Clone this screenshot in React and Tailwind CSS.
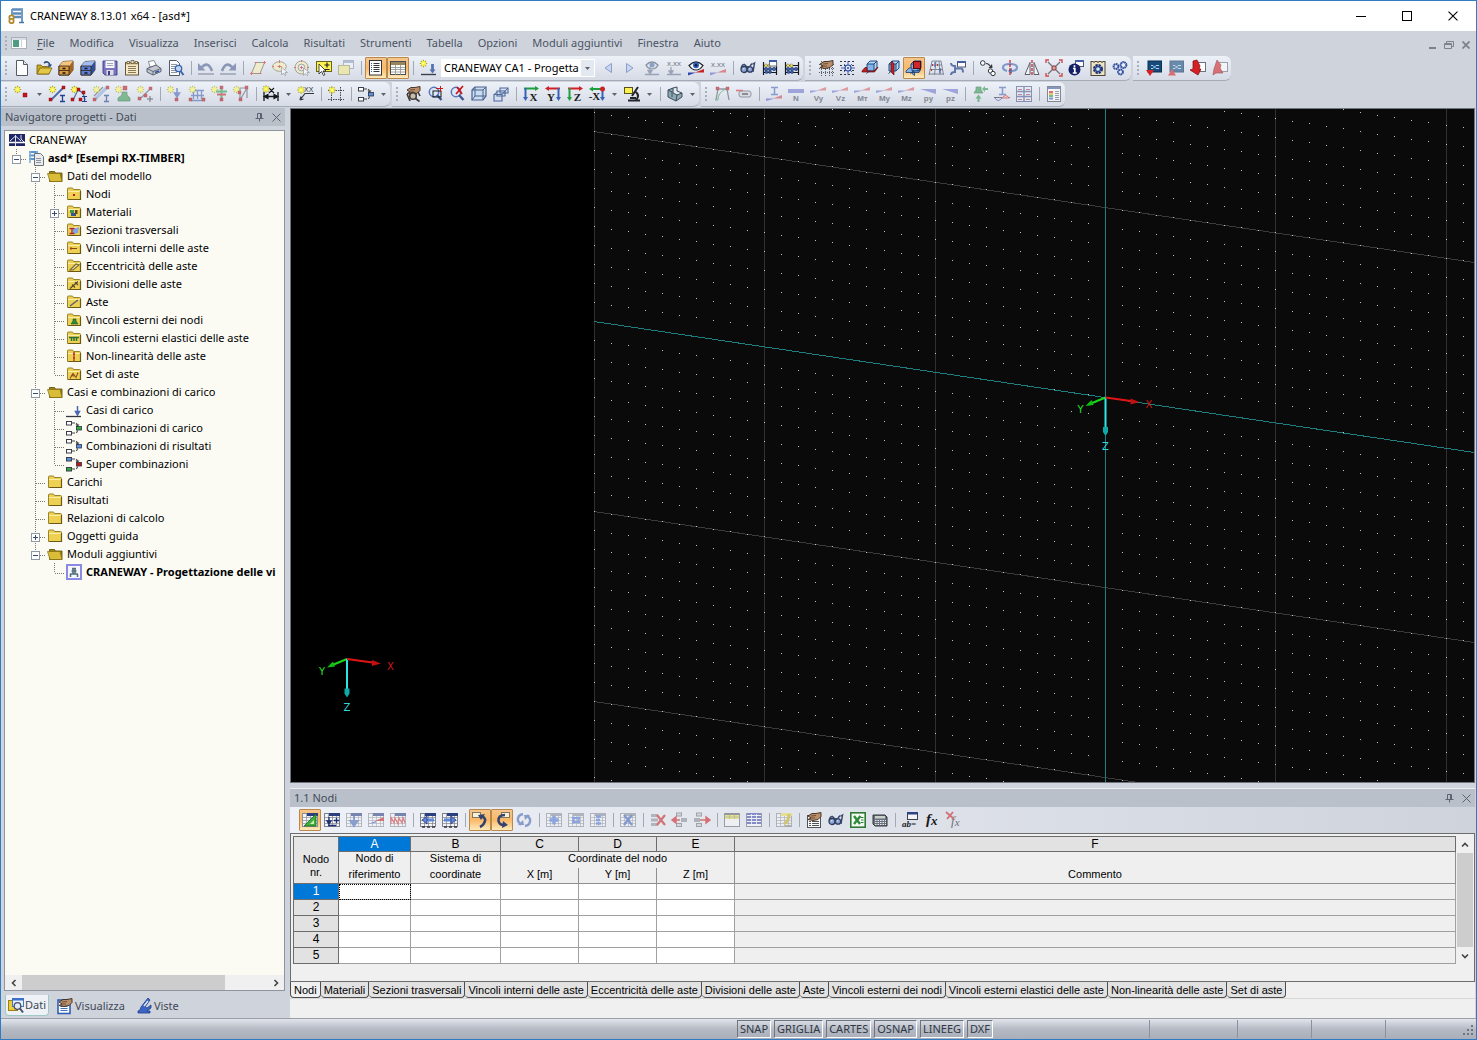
import React from "react";

/* ---------- drawing helpers ---------- */

const Star = ({ x = 3.5, y = 3.5 }) => (
  <g transform={`translate(${x} ${y})`}>
    <path d="M0-3.7V3.7M-3.7 0H3.7M-2.6-2.6 2.6 2.6M2.6-2.6-2.6 2.6" stroke="#a9a31c" strokeWidth="1.1" />
    <circle r="2.5" fill="#f6f23c" />
    <circle r="1.1" fill="#ffffa8" />
  </g>
);

const Sq = ({ x, y, s = 3, c = "#c8141c" }) => (
  <rect x={x} y={y} width={s} height={s} fill={c} stroke="#7a0c10" strokeWidth="0.4" />
);

const GridBack = ({ c = "#8b8f98", head = "#2b3f80" }) => (
  <>
    <rect x="0.5" y="1.5" width="15" height="13" fill="#f3f4f6" stroke={c} />
    <path d="M0 5.5h16M0 8.5h16M0 11.5h16M4.5 2v12M8.5 2v12M12.5 2v12" stroke={c} strokeWidth="0.7" />
    <rect x="5" y="1" width="11" height="3" fill={head} />
  </>
);

const Cube = ({ kind }) => (
  <>
    <path d="M5 4 8 1h7v7l-3 3" fill="#b9d6f4" stroke="#1d4a84" />
    <path d="M5 4h7v7H5z" fill="#86b2e6" stroke="#1d4a84" />
    <path d="M12 4l3-3" stroke="#1d4a84" />
    {kind === 1 && <path d="M0 11 3 7.5h2V11h7l3-3.500h1L12.500 12H0z" fill="#c61f1f" stroke="#5b1013" strokeWidth="0.7" />}
    {kind === 2 && <path d="M8 1l2 3v11l-3-3V4z" fill="#c61f1f" stroke="#5b1013" strokeWidth="0.7" />}
    {kind === 3 && (
      <>
        <rect x="7.500" y="1.500" width="7" height="7" fill="#d0282a" stroke="#55090b" />
        <path d="M0 11l3-3h3v3h7l2-2-2 3.500H0zM6 12h2.500v3.500L6 13.500z" fill="#86b2e6" stroke="#173c70" strokeWidth="0.8" />
      </>
    )}
    <path d="M4.500 13.500 8 10.500" stroke="#20355f" strokeWidth="0.9" />
  </>
);

const Diagram = ({ label, blue }) => (
  <>
    {blue ? (
      <path d="M0 3h16v5z" fill="#7078cc" />
    ) : (
      <>
        <path d="M0 4.5h9L0 7z" fill="#7078cc" />
        <path d="M7 4.5 16 1v3.5z" fill="#d9656b" />
      </>
    )}
    <text x="8.5" y="15" textAnchor="middle" fontFamily="Liberation Sans" fontWeight="bold" fontSize="8" fill="#474b53">
      {label}
    </text>
  </>
);

const AxisView = ({ label, a, b, flip }) => (
  <>
    <path d={flip ? "M15 2.5H3" : "M1 2.5h11"} stroke={a} strokeWidth="2" />
    <path d={flip ? "M4 0v5L0 2.5z" : "M12 0v5l4-2.5z"} fill={a} />
    <path d={flip ? "M13.5 2v10" : "M2.5 2v10"} stroke={b} strokeWidth="2" />
    <path d={flip ? "M11 11h5l-2.500 4z" : "M0 11h5l-2.500 4z"} fill={b} />
    <text x={flip ? 6 : 10.5} y="15" textAnchor="middle" fontFamily="Liberation Serif" fontWeight="bold" fontSize="11" fill="#1c1c1c">
      {label}
    </text>
  </>
);

const Abacus = ({ win }) => (
  <>
    <path d="M1.500 2v13M14.500 2v13M1 5.500h14M1 12.500h14" stroke="#15171c" strokeWidth="1.2" />
    <path d="M1 9h14" stroke="#15171c" strokeWidth="0.7" />
    <g fill="#3c63b8" stroke="#14264f" strokeWidth="0.5">
      <circle cx="4" cy="9" r="1.700" />
      <circle cx="8" cy="9" r="1.700" />
      <circle cx="12" cy="9" r="1.700" />
      <circle cx="4.500" cy="12" r="1.500" />
      <circle cx="8" cy="12" r="1.500" />
    </g>
    <g fill="#f0e070" stroke="#6b6420" strokeWidth="0.5">
      <circle cx="4" cy="5.500" r="1.500" />
      <circle cx="7.500" cy="5.500" r="1.500" />
    </g>
    {win && (
      <>
        <rect x="7.500" y="0.500" width="7" height="5.500" fill="#fff" stroke="#6f7682" />
        <rect x="7" y="0" width="8" height="2" fill="#3b5aa8" />
      </>
    )}
  </>
);

const Binoculars = () => (
  <>
    <path d="M1.500 8.500q0-4 3-4l2 2q2 0 3 1 1-3 3-4" fill="none" stroke="#3d4c70" strokeWidth="1.600" />
    <circle cx="4" cy="9.500" r="3" fill="#8fa8d8" stroke="#303d5c" strokeWidth="1.300" />
    <circle cx="10" cy="9.500" r="2.700" fill="#8fa8d8" stroke="#303d5c" strokeWidth="1.300" />
    <path d="M13 4l1.500-1-1.500 9" stroke="#3d4c70" strokeWidth="1.500" fill="none" />
    <path d="M3 9l1.500-1M9 9l1.500-1" stroke="#eaf1ff" />
  </>
);

const Hand = () => (
  <>
    <path d="M2 4 6 1.500h4l5-1v4l-3 3-5 1-5-1 3-1.500z" fill="#b98e69" stroke="#3a2a1e" strokeWidth="0.900" />
    <path d="M5 4l5-.5M4 6h5" stroke="#4d382a" strokeWidth="0.700" />
  </>
);

const Drawer = ({ a, b, c }) => (
  <>
    <path d="M1 6 5 1.500 15 1v9l-4 5H1z" fill={a} stroke="#3d2b16" strokeWidth="0.900" />
    <path d="M11 15V6l4-5v9z" fill={c} />
    <path d="M1 6 5 1.500 15 1 11 6z" fill={b} />
    <path d="M1 6h10v9H1zM1 10.500h10" fill={a} stroke="#2b2018" strokeWidth="0.800" />
    <path d="M4.500 8.500h3M4.500 13h3" stroke="#161616" strokeWidth="1.400" />
  </>
);

const Combo = ({ a = "#fff", b = "#fff", c }) => (
  <>
    <rect x="0.500" y="1.500" width="5" height="3.500" fill={a} stroke="#3a3f4a" />
    <rect x="0.500" y="11.500" width="5" height="3.500" fill={b} stroke="#3a3f4a" />
    <path d="M6 3h3q2.500 0 2.500 3M6 13h3q2.500 0 2.500-3" fill="none" stroke="#454545" strokeWidth="1.200" strokeDasharray="3 1" />
    <path d="M9.500 4.500h4l-2 2.500z" fill="#454545" />
    <rect x="10.500" y="6.500" width="5" height="3.500" fill={c} stroke="#2a3142" strokeWidth="0.800" />
  </>
);

const Loupe = ({ x = 7, y = 6 }) => (
  <>
    <circle cx={x} cy={y} r="4.700" fill="#dce8f8" stroke="#5676b8" strokeWidth="1.500" />
    <path d={`M${x + 3} ${y + 3}l4.500 5`} stroke="#3d5796" strokeWidth="2.400" />
  </>
);

const Monitor = () => (
  <>
    <rect x="2" y="1" width="13.500" height="11" fill="#164b7c" stroke="#0b2f53" />
    <path d="M5 5.500h2l1.500 1.500L10 5.500h3M5 8.500h2L8.500 7l1.500 1.500h3" stroke="#a8d4f0" fill="none" />
  </>
);

const Sheet = () => (
  <>
    <path d="M2.500 0.500h7l4 4v11h-11z" fill="#fdfdfd" stroke="#555b66" />
    <path d="M9.500 0.500v4h4" fill="#dde1e8" stroke="#555b66" />
  </>
);

const MiniGrid = () => (
  <path d="M1 4.500h15M1 8.500h15M1 12.500h15M3.500 1v15M7.500 1v15M11.500 1v15M14.500 1v15" stroke="#5b5e66" strokeDasharray="1 1" />
);

/* ---------- icon set, 16 x 16 ---------- */

const ICONS = {
  app: (
    <>
      <path d="M4 1.500h11M4 5.500h11M4 9h9" stroke="#5f8dba" strokeWidth="2.500" />
      <path d="M4 1v10M14 1v14" stroke="#6f9cc5" strokeWidth="2" />
      <path d="M11 14.500h5" stroke="#4c769f" strokeWidth="1.500" />
      <circle cx="3.500" cy="9.500" r="2.200" fill="#fff" stroke="#b38a2a" strokeWidth="1.800" />
      <circle cx="3.500" cy="13" r="2.200" fill="#fff" stroke="#b38a2a" strokeWidth="1.800" />
    </>
  ),
  doc: (
    <>
      <rect x="0.500" y="2.500" width="15" height="11" fill="#fff" stroke="#aab0ba" />
      <rect x="1" y="3" width="14" height="2" fill="#d9dde5" />
      <rect x="2" y="5" width="6" height="7" fill="#4e9b84" />
      <path d="M10.500 5v7" stroke="#d0d4da" />
    </>
  ),
  newFile: <Sheet />,
  open: (
    <>
      <path d="M1 14V5h4l1.500 1.500H13V14z" fill="#c9a927" stroke="#6f5a0c" strokeWidth="0.800" />
      <path d="M1 14 4 8h12l-3 6z" fill="#e3c848" stroke="#77610e" strokeWidth="0.800" />
      <path d="M8 3q4-3 6 2" fill="none" stroke="#2f4f80" strokeWidth="1.600" />
      <path d="M11.500 4.500h4.500l-2 3z" fill="#2f4f80" />
    </>
  ),
  drawerO: <Drawer a="#dd9a42" b="#f4c581" c="#a4651d" />,
  drawerB: <Drawer a="#5b80d4" b="#a4bdf0" c="#31509b" />,
  save: (
    <>
      <path d="M1 1h14v14H3l-2-2z" fill="#7874bd" stroke="#413d80" strokeWidth="0.900" />
      <rect x="3.500" y="1" width="9" height="7" fill="#f6f6fa" />
      <path d="M5 3.500h6M5 5.500h6" stroke="#a2a6b6" />
      <rect x="4.500" y="10" width="7" height="5" fill="#dcdde6" />
      <rect x="6" y="11" width="2" height="4" fill="#413d80" />
    </>
  ),
  clip: (
    <>
      <rect x="1.500" y="2.500" width="13" height="12.500" fill="#f6e9c8" stroke="#66583c" />
      <path d="M2 2.500h12v2H2z" fill="#c8ae78" />
      <path d="M3 1.500h2.500v2H3zM7 .5h3v3H7zM11 1.500h2.500v2H11z" fill="#e6dcc0" stroke="#5a4a2c" strokeWidth="0.700" />
      <path d="M4 6.500h8M4 8.500h8M4 10.500h8M4 12.500h8" stroke="#8a7b5a" />
    </>
  ),
  print: (
    <>
      <path d="M4 7 2.500 1.500 8 .5l3 6z" fill="#fff" stroke="#6d727c" strokeWidth="0.800" />
      <path d="M1 8.500 10 5l5 3.500v3L7 15l-6-3z" fill="#c4c8d2" stroke="#4d525d" strokeWidth="0.900" />
      <path d="M1 8.500 7 11.500 15 8.500M7 11.500V15" stroke="#5b606c" fill="none" strokeWidth="0.900" />
      <path d="M9 12.500l4-1.500" stroke="#2f55a5" strokeWidth="1.400" />
    </>
  ),
  preview: (
    <>
      <path d="M1.500 0.500h7l3 3v12h-10z" fill="#fdfdfd" stroke="#555b66" />
      <path d="M3 4.500h6M3 6.500h5M3 8.500h4M3 10.500h4M3 12.500h6" stroke="#8e94a2" />
      <circle cx="10.500" cy="8.500" r="3.200" fill="#bfd6f3" stroke="#3b63aa" strokeWidth="1.300" />
      <path d="M12.500 11l3 4" stroke="#3b63aa" strokeWidth="2" />
    </>
  ),
  undo: (
    <>
      <path d="M3 8Q10 0 14 11" fill="none" stroke="#8b97b6" strokeWidth="2.600" />
      <path d="M0 3v7.500h7.500z" fill="#8b97b6" />
      <path d="M0 14h16" stroke="#9aa2b4" strokeWidth="1.500" />
    </>
  ),
  redo: (
    <>
      <path d="M13 8Q6 0 2 11" fill="none" stroke="#8b97b6" strokeWidth="2.600" />
      <path d="M16 3v7.500H8.500z" fill="#8b97b6" />
      <path d="M0 14h16" stroke="#9aa2b4" strokeWidth="1.500" />
    </>
  ),
  selPoly: (
    <>
      <path d="M1.500 13.500 6 2.500h8.500L10 13.500z" fill="#f6f0b4" stroke="#6d6a58" />
      <path d="M0 13.500h3M1.500 12v3M4.500 2.500h3M13 2.500h3M14.500 1v3M8.500 13.500h3" stroke="#d2302f" />
    </>
  ),
  selEllipse: (
    <>
      <ellipse cx="7.500" cy="6.500" rx="6.800" ry="4.800" fill="#f6f0b4" stroke="#7e7a62" />
      <path d="M5.500 6.500h4M7.500 0v3M7.500 5v3M0 6.500h2" stroke="#d2302f" />
      <path d="M9.500 7v8l2-2 1.500 2.500 1-.5-1-2.500h2.500z" fill="#fff" stroke="#555" strokeWidth="0.600" />
    </>
  ),
  selRing: (
    <>
      <circle cx="7.500" cy="7.500" r="6.500" fill="#f6f0b4" stroke="#7e7a62" />
      <circle cx="7.500" cy="7.500" r="3.400" fill="#e7eaf1" stroke="#7e7a62" />
      <path d="M6 7.500h3M7.500 6v3M7.500 0v2M0 7.500h2M13 7.500h2" stroke="#d2302f" />
      <path d="M9.500 8v7.500l2-2 1.500 2 1-.5-1-2.500h2.500z" fill="#fff" stroke="#555" strokeWidth="0.600" />
    </>
  ),
  selAdd: (
    <>
      <rect x="0.500" y="1.500" width="15" height="10" fill="#fbf14f" stroke="#6a6420" />
      <path d="M8.500 5h5M11 2.500v5M8.500 9.500h5" stroke="#222" strokeWidth="1.200" />
      <path d="M3 4v10l2.500-2.500L7.500 15.500l1.500-1-2-3.500h3z" fill="#fff" stroke="#222" strokeWidth="0.800" />
    </>
  ),
  winCopy: (
    <>
      <rect x="5.500" y="0.500" width="10" height="8" fill="#f2f4f8" stroke="#8e95a6" />
      <rect x="6" y="1" width="9" height="2" fill="#8fa2c8" />
      <rect x="0.500" y="5.500" width="11" height="9" fill="#f1e98a" stroke="#a09763" />
    </>
  ),
  navToggle: (
    <>
      <rect x="1.500" y="0.500" width="12" height="14.500" fill="#fff" stroke="#33363d" />
      <path d="M5.500 3.500h6M5.500 5.500h6M5.500 7.500h6M5.500 9.500h6M5.500 11.500h6" stroke="#33363d" />
      <path d="M3 3.500h1M3 5.500h1M3 7.500h1M3 9.500h1M3 11.500h1" stroke="#3355aa" />
    </>
  ),
  tblToggle: (
    <>
      <rect x="0.500" y="1.500" width="15" height="13" fill="#fffdf4" stroke="#4b4e55" />
      <rect x="1" y="2" width="14" height="3" fill="#9a8558" />
      <path d="M1 7.500h14M1 9.500h14M1 12h14M5.500 5v10M10.500 5v10" stroke="#8c8f96" strokeWidth="0.800" />
    </>
  ),
  newLoad: (
    <>
      <Star />
      <path d="M12.500 4v7" stroke="#5473b4" strokeWidth="2.800" />
      <path d="M9.500 9.500h6L12.500 13.500z" fill="#5473b4" />
      <path d="M1 14.500h15" stroke="#3a3f4a" strokeWidth="1.400" />
    </>
  ),
  prev: <path d="M11.500 3.500v9l-6.500-4.500z" fill="#bccdf0" stroke="#4f70b8" />,
  next: <path d="M4.500 3.500v9L11 8z" fill="#bccdf0" stroke="#4f70b8" />,
  eyeG: (
    <>
      <path d="M2 5q6-6 12 0-2 4-6 4t-6-4z" fill="#dfe5ef" stroke="#4d5668" strokeWidth="1.200" />
      <circle cx="8" cy="5" r="2.500" fill="#4f74b0" />
      <path d="M6 7v5M4 10.500h4L6 14zM1 14.500h14" stroke="#6f7a92" fill="#6f80a5" strokeWidth="1.300" />
    </>
  ),
  xxG: (
    <>
      <text x="8" y="6" textAnchor="middle" fontFamily="Liberation Sans" fontSize="8" fill="#252b37">x.xx</text>
      <path d="M5 7v5M3 11h4l-2 3zM1 14.500h14" stroke="#6f7a92" fill="#6f80a5" strokeWidth="1.300" />
    </>
  ),
  eye: (
    <>
      <path d="M1 5.500q7-7 14 0-3 4.500-7 4.500-4 0-7-4.500z" fill="#fff" stroke="#20242e" strokeWidth="1.200" />
      <circle cx="8" cy="5.200" r="3" fill="#2b5fb8" />
      <circle cx="8" cy="5.200" r="1.200" fill="#0b1735" />
      <path d="M0 12.500h8L0 15.500z" fill="#3445b0" />
      <path d="M7 12.500 16 9v3.500z" fill="#c62428" />
    </>
  ),
  xx: (
    <>
      <text x="8" y="7" textAnchor="middle" fontFamily="Liberation Sans" fontSize="8" fill="#252b37">x.xx</text>
      <path d="M0 12.500h8L0 15.500z" fill="#5f6bc8" />
      <path d="M7 12.500 16 9v3.500z" fill="#d4484c" />
    </>
  ),
  binoc: <Binoculars />,
  abacusW: <Abacus win />,
  abacus: <Abacus />,
  handGrid: (
    <>
      <MiniGrid />
      <Hand />
    </>
  ),
  snapGrid: (
    <>
      <path d="M0 1.500h16M0 5.500h16M0 10.500h16M0 14.500h16" stroke="#30343e" strokeDasharray="2 2" />
      <path d="M8 1v14M1 8h14M4 4l8 8M12 4l-8 8" stroke="#3450a4" strokeWidth="0.900" />
      <circle cx="8" cy="8" r="3" fill="#dfe9fb" stroke="#2c4a9e" strokeWidth="1.200" />
      <circle cx="8" cy="8" r="1" fill="#2c4a9e" />
    </>
  ),
  cube1: <Cube kind={1} />,
  cube2: <Cube kind={2} />,
  cube3: <Cube kind={3} />,
  gridPersp: (
    <>
      <path d="M4 1h9M3 5h11M2 9.500h13M1 14h14M4 1 1 15M8 1 6.500 15M11 1l1 14M13 1l2.500 14" stroke="#777d8a" strokeWidth="0.900" />
      <path d="M4 5h1M9 5h1M3 10h1M12 10h1" stroke="#d02a2a" strokeWidth="1.800" />
      <path d="M7 2v5M12 8v5" stroke="#3f6fc0" strokeWidth="1.200" />
    </>
  ),
  wrenchWin: (
    <>
      <rect x="7.500" y="1.500" width="8" height="5.500" fill="#fff" stroke="#4e5563" />
      <rect x="7" y="1" width="9" height="2" fill="#465fa0" />
      <path d="M1 3q0 3 4 3v6q-4 0-4 3M5 8.500h6q2 0 2 4" fill="none" stroke="#5f76ac" strokeWidth="2" />
    </>
  ),
  copyObj: (
    <>
      <circle cx="2.800" cy="3" r="2.300" fill="#fff" stroke="#33363d" />
      <path d="M6 3.500q3 0 5 4" fill="none" stroke="#33363d" strokeWidth="1.200" />
      <path d="M8.500 8h4l-.5-4z" fill="#33363d" />
      <circle cx="10.500" cy="11" r="2.200" fill="#fff" stroke="#33363d" />
      <circle cx="13" cy="13.500" r="2.200" fill="#fff" stroke="#33363d" />
    </>
  ),
  rotate: (
    <>
      <path d="M5 11q-4-1-4-3.500C1 5 4 4 8 4s7 1 7 3.500c0 2-2 3.500-6 3.500" fill="none" stroke="#7d97c8" strokeWidth="2.200" />
      <path d="M10 8v6l-4-3z" fill="#5c7ab6" />
      <path d="M8 0v16" stroke="#c9191d" strokeWidth="1.200" strokeDasharray="3 1" />
    </>
  ),
  mirror: (
    <>
      <path d="M6 2.500v12H1zM10 2.500v12h5z" fill="#f3f5f9" stroke="#5b5f69" />
      <path d="M8 0v16" stroke="#c9191d" strokeWidth="1.200" strokeDasharray="3 1" />
    </>
  ),
  explode: (
    <>
      <path d="M2 2l12 12M14 2 2 14" stroke="#6f7075" strokeWidth="1.200" />
      <circle cx="8" cy="8" r="2.200" fill="#d9a0a0" stroke="#8b3033" />
      <path d="M0 3V0h3M13 0h3v3M0 13v3h3M13 16h3v-3" stroke="#d24a4c" fill="none" strokeWidth="1.400" />
    </>
  ),
  info: (
    <>
      <rect x="7.500" y="0.500" width="8" height="6" fill="#fff" stroke="#4e5563" />
      <rect x="7" y="0" width="9" height="2" fill="#465fa0" />
      <circle cx="6.500" cy="9.500" r="6" fill="#141f68" />
      <path d="M6.500 5.200v2M5 8.500h1.800v4M4.800 13h4" stroke="#fff" strokeWidth="1.700" fill="none" />
    </>
  ),
  gearDoc: (
    <>
      <rect x="1" y="1.500" width="14" height="14" fill="#ece3c8" stroke="#4b4538" />
      <path d="M3 1h2v2H3zM7 1h2v2H7zM11 1h2v2h-2z" fill="#8d8264" />
      <circle cx="8" cy="9" r="3.800" fill="#d7e2f5" stroke="#1e2f66" strokeWidth="2.400" strokeDasharray="2.200 0.800" />
      <circle cx="8" cy="9" r="2.600" fill="none" stroke="#2c478f" strokeWidth="1.500" />
    </>
  ),
  gears: (
    <g fill="#e8eefb" stroke="#33509c" strokeWidth="2">
      <circle cx="4" cy="6.500" r="2.400" strokeDasharray="1.600 .4" />
      <circle cx="11.500" cy="5" r="2.900" strokeDasharray="1.600 .4" />
      <circle cx="8.500" cy="12" r="2.400" strokeDasharray="1.600 .4" />
    </g>
  ),
  mon: (
    <>
      <Monitor />
      <path d="M0 10h8l-4 6z" fill="#d62124" />
    </>
  ),
  monUp: (
    <>
      <Monitor />
      <path d="M0 15.500h8L4 9z" fill="#d62124" />
    </>
  ),
  redPage: (
    <>
      <rect x="6.500" y="2.500" width="9" height="9" fill="#fdfdfd" stroke="#6c7280" />
      <path d="M3 1l4-1 3 6-1 3h2l-3 6-8-5 3-1z" fill="#d62124" stroke="#7b0c10" strokeWidth="0.700" />
    </>
  ),
  redPageUp: (
    <>
      <rect x="6.500" y="2.500" width="9" height="9" fill="#fdfdfd" stroke="#6c7280" />
      <path d="M5 0l4 5-1 3 3 5H4l-3 2 1-6z" fill="#d62124" stroke="#7b0c10" strokeWidth="0.700" />
    </>
  ),
  /* second row */
  node: (
    <>
      <Star />
      <Sq x={9} y={7} s={4} />
    </>
  ),
  member: (
    <>
      <path d="M2 14 14 2" stroke="#4c6ca8" strokeWidth="1.800" />
      <Star />
      <Sq x={0} y={12} />
      <Sq x={13} y={0} />
      <path d="M11 9.500h5M13.500 9.500v6M11 15.500h5" stroke="#24408e" strokeWidth="1.300" />
    </>
  ),
  memberSet: (
    <>
      <path d="M2 14 7 4l5 3 2 7" stroke="#4c6ca8" strokeWidth="1.200" fill="none" />
      <Star x={3.5} y={3.5} />
      <Sq x={0} y={12} />
      <Sq x={6} y={2} />
      <Sq x={11} y={5} />
      <Sq x={8} y={12} />
      <path d="M11 10.500h5M13.500 10.500v5M11 15.500h5" stroke="#24408e" strokeWidth="1.200" />
    </>
  ),
  memberT: (
    <>
      <path d="M2 14 14 2M1 10 10 1" stroke="#5b6270" strokeWidth="1.300" />
      <path d="M3 12 13 2" stroke="#8db0dc" strokeWidth="3" />
      <Star />
      <Sq x={0} y={12} />
      <Sq x={13} y={0} />
      <path d="M11 9.500h5M13.500 9.500v6M11 15.500h5" stroke="#24408e" strokeWidth="1.300" />
    </>
  ),
  support: (
    <>
      <Star x={3.5} y={3.5} />
      <Sq x={8} y={0} s={4} />
      <path d="M7 6h5v3l3 3v3H3v-3l4-3z" fill="#3f9e55" stroke="#246638" strokeWidth="0.700" />
    </>
  ),
  hinge: (
    <>
      <path d="M2 14 14 2" stroke="#5b6270" strokeWidth="1.300" />
      <Star />
      <Sq x={1} y={11} />
      <Sq x={7} y={8} />
      <Sq x={12} y={1} />
      <path d="M13 10v6M10 13h6" stroke="#2a2d33" />
    </>
  ),
  loadNode: (
    <>
      <Star />
      <path d="M10 2v6M7.500 7h5L10 11z" stroke="#4a69b4" strokeWidth="1.600" fill="#4a69b4" />
      <Sq x={8} y={12} />
    </>
  ),
  loadMember: (
    <>
      <path d="M2 9.500h13M2 14.500h14M4.500 4v9M8.500 4v9M12.500 4v9M3 4.500h12" stroke="#4a69b4" strokeWidth="1.300" />
      <Star />
      <Sq x={0} y={12} />
      <Sq x={13} y={12} />
    </>
  ),
  loadMoment: (
    <>
      <Star />
      <Sq x={9} y={0} />
      <path d="M5 5.500h11M10.500 3v10" stroke="#2f9b4d" strokeWidth="2" />
      <Sq x={9} y={12} />
      <path d="M6 8.500h9" stroke="#c8282a" strokeWidth="2" />
    </>
  ),
  loadFree: (
    <>
      <path d="M7 2v12M7 2h7v10M14 2 7 14" stroke="#5a6070" strokeWidth="1.200" fill="none" />
      <Star />
      <Sq x={5} y={5} />
      <Sq x={12} y={0} />
      <Sq x={6} y={12} />
    </>
  ),
  dim: (
    <>
      <path d="M1 6v9M15 6v9M2 10.500h12" stroke="#15171c" strokeWidth="1.300" />
      <path d="M1 10.500l4-2v4zM15 10.500l-4-2v4zM6 2l5 5M11 2 6 7" fill="#15171c" stroke="#15171c" strokeWidth="1.100" />
      <Star x={3} y={3} />
    </>
  ),
  comment: (
    <>
      <path d="M2 14 7 7.500h9M2 14l1-3.500M2 14l3.500-1" stroke="#33363d" strokeWidth="1.200" fill="none" />
      <text x="6" y="6" fontFamily="Liberation Sans" fontSize="7" fill="#33363d">XX</text>
      <Star x={3} y={4} />
    </>
  ),
  guideGrid: (
    <>
      <path d="M3.500 1v15M12.500 1v15M0 4.500h16M0 13.500h16" stroke="#43464e" strokeDasharray="1.500 1" />
      <Star x={4} y={4} />
    </>
  ),
  combB: <Combo c="#5b8fe0" />,
  pan: (
    <>
      <Hand />
      <circle cx="8" cy="10" r="3.300" fill="#c8bba8" stroke="#3d3a38" strokeWidth="1.500" />
      <path d="M10.500 12.500l4 3M2 8l3 7M13 6l2 4" stroke="#3d3a38" strokeWidth="1.600" />
    </>
  ),
  zoomWin: (
    <>
      <Loupe />
      <rect x="6" y="5" width="8" height="6" fill="none" stroke="#16181d" />
      <path d="M9 2.500h7M13.500 0v6" stroke="#c9191d" />
    </>
  ),
  zoomX: (
    <>
      <Loupe />
      <path d="M8 1l5 7M14 0 7 8" stroke="#c9191d" strokeWidth="1.800" />
    </>
  ),
  cubeWire: (
    <>
      <path d="M1 4 4 1h11v9l-3 4H1z" fill="#c9dcf0" stroke="#4a628c" strokeWidth="1.200" />
      <path d="M1 4h11v10M12 4l3-3M4 1v9h11M4 10l-3 4" stroke="#4a628c" fill="none" />
    </>
  ),
  cubes: (
    <>
      <path d="M7 2h8v5H7zM4 5h8v5H4zM1 8.500h8V15H1z" fill="#d5dff0" stroke="#4e679c" strokeWidth="1.100" />
      <path d="M1 8.500 4 6M9 8.500 15 2" stroke="#4e679c" />
    </>
  ),
  vX: <AxisView label="X" a="#1f9e3c" b="#3a62b8" />,
  vY: <AxisView label="Y" a="#cf2226" b="#3a62b8" flip />,
  vZ: <AxisView label="Z" a="#cf2226" b="#1f9e3c" />,
  vmX: (
    <>
      <path d="M13 3H3" stroke="#1f9e3c" strokeWidth="2" />
      <path d="M4 .5v5L0 3z" fill="#1f9e3c" />
      <path d="M13.500 3v9" stroke="#3a62b8" strokeWidth="2" />
      <path d="M11 11h5l-2.500 4z" fill="#3a62b8" />
      <circle cx="13.500" cy="3" r="2.500" fill="#cf2226" />
      <text x="5.500" y="14" textAnchor="middle" fontFamily="Liberation Serif" fontWeight="bold" fontSize="11" fill="#1c1c1c">-X</text>
    </>
  ),
  micro: (
    <>
      <path d="M14 1 8 10M4 14.500h12M12 6q4 4 0 8M6 12h6" stroke="#23252b" strokeWidth="2" fill="none" />
      <rect x="0.500" y="1.500" width="8" height="6" fill="#fbf14f" stroke="#55501c" />
    </>
  ),
  solid: (
    <>
      <path d="M1 4 6 2v5l4 2 5-2v4l-6 4-8-4z" fill="#8fa9b5" stroke="#3b4d5b" />
      <path d="M6 2l4-1v4l5 2M10 9l-1 6M1 4l4 2v5" stroke="#3b4d5b" fill="none" />
    </>
  ),
  deform: (
    <>
      <path d="M2 14 4 3h9l2 11" fill="none" stroke="#5b606c" strokeWidth="1.300" />
      <path d="M4 14Q4 6 12 3M1 14h3" stroke="#3a9f58" fill="none" />
      <Sq x={2} y={1} />
      <Sq x={12} y={1} />
    </>
  ),
  stress: (
    <>
      <rect x="3" y="5" width="12" height="6" rx="2" fill="#d3d6dd" stroke="#5f6470" />
      <path d="M6 8h6" stroke="#555" strokeWidth="2" />
      <path d="M0 4.500h7" stroke="#c34" strokeWidth="1.600" />
    </>
  ),
  resI: (
    <>
      <path d="M5 1.500h7M8.500 1.500v7M5 8.500h7" stroke="#4a69b4" strokeWidth="1.500" />
      <path d="M0 12.500h9L0 15z" fill="#5b63c8" />
      <path d="M7 12.500 16 9v3.500z" fill="#d05055" />
    </>
  ),
  dN: (
    <>
      <rect x="0" y="3" width="16" height="4" fill="#7078cc" />
      <text x="8" y="15" textAnchor="middle" fontFamily="Liberation Sans" fontWeight="bold" fontSize="8" fill="#474b53">N</text>
    </>
  ),
  dVy: <Diagram label="Vy" />,
  dVz: <Diagram label="Vz" />,
  dMt: <Diagram label="Mт" />,
  dMy: <Diagram label="My" />,
  dMz: <Diagram label="Mz" />,
  dpy: <Diagram label="py" blue />,
  dpz: <Diagram label="pz" blue />,
  react: (
    <>
      <path d="M4 1h5v3l2 3H2l2-3z" fill="#359a50" stroke="#246638" strokeWidth="0.700" />
      <path d="M16 3h-4M6.500 16v-4" stroke="#359a50" strokeWidth="2" />
      <path d="M13 0v6l-3-3zM3.500 12.500h6l-3-4z" fill="#359a50" />
    </>
  ),
  section: (
    <>
      <path d="M5 1.500h7M8.500 1.500v7M5 8.500h7" stroke="#4a69b4" strokeWidth="1.500" />
      <path d="M0 11.500h16" stroke="#33363d" />
      <path d="M1 12q3 5 7 0" fill="none" stroke="#3a50b8" />
      <path d="M8 12q4-5 7 0z" fill="#eec3c5" stroke="#c33" />
    </>
  ),
  resGrid: (
    <>
      <rect x="0.500" y="0.500" width="15" height="15" fill="#e9ecf4" stroke="#4a5890" />
      <path d="M8 0v16M0 5.500h16M0 10.500h16" stroke="#4a5890" strokeWidth="1.400" />
      <path d="M2 3.500h4M10 3.500h4M2 8.500h4M10 8.500h4M2 13.500h4M10 13.500h4" stroke="#a44a58" />
    </>
  ),
  panel: (
    <>
      <rect x="1.500" y="0.500" width="13" height="15" fill="#fff" stroke="#454a55" />
      <rect x="2" y="1" width="12" height="2" fill="#465fa0" />
      <path d="M3 6h4" stroke="#d22" strokeWidth="2" />
      <path d="M3 8h4" stroke="#e8b422" strokeWidth="2" />
      <path d="M3 10h4" stroke="#3aa04a" strokeWidth="2" />
      <path d="M3 12.500h4" stroke="#3a62c8" strokeWidth="2" />
      <path d="M9 5.500h4M9 7.500h4M9 9.500h4M9 11.500h4M9 13.500h4" stroke="#6a6f7a" />
    </>
  ),
  /* table toolbar */
  tEdit: (
    <>
      <GridBack />
      <path d="M2 14 14 2v12z" fill="#3fae3a" stroke="#1f6a1d" strokeWidth="0.800" />
      <path d="M8 12l4-4v4z" fill="#c8f0b8" />
    </>
  ),
  tInsert: (
    <>
      <GridBack c="#7d818b" />
      <path d="M5 5v5M3 9h4L5 12zM10 8.500h5M12.500 6v5M4 13.500h8" stroke="#1d2f78" strokeWidth="1.300" fill="#1d2f78" />
    </>
  ),
  tDown: (
    <>
      <GridBack />
      <path d="M8 4v6M4.500 9h7L8 14z" stroke="#4a69b4" strokeWidth="2" fill="#4a69b4" />
    </>
  ),
  tDiag: (
    <>
      <GridBack />
      <path d="M0 12 8 9v1.500z" fill="#3445b0" />
      <path d="M7 9l9-4v4z" fill="#c62428" />
    </>
  ),
  tWave: (
    <>
      <GridBack />
      <path d="M1 12V5l3 6 1-5 3 6 1-6 3 5 1-6 2 6" fill="none" stroke="#d23a3d" strokeWidth="1.200" />
    </>
  ),
  tLeft: (
    <>
      <GridBack c="#7d818b" />
      <path d="M14 8H6" stroke="#5f87d8" strokeWidth="3" />
      <path d="M7 4v8L2 8z" fill="#5f87d8" stroke="#1d2f78" strokeWidth="0.700" />
      <path d="M2 15h3M7 15h3M12 15h3" stroke="#333" strokeWidth="1.500" />
    </>
  ),
  tRight: (
    <>
      <GridBack c="#7d818b" />
      <path d="M2 8h8" stroke="#5f87d8" strokeWidth="3" />
      <path d="M9 4v8l5-4z" fill="#5f87d8" stroke="#1d2f78" strokeWidth="0.700" />
      <path d="M2 15h3M7 15h3M12 15h3" stroke="#333" strokeWidth="1.500" />
    </>
  ),
  tSync1: (
    <>
      <rect x="0.500" y="0.500" width="8" height="5" fill="#f8efd8" stroke="#7f7760" />
      <path d="M9 4q5 2 4 5-1 4-5 6" fill="none" stroke="#33436e" strokeWidth="2.600" />
      <path d="M6 3l7-1-4 6z" fill="#33436e" />
    </>
  ),
  tSync2: (
    <>
      <rect x="7.500" y="0.500" width="8" height="5" fill="#f8efd8" stroke="#7f7760" />
      <path d="M11 3Q4 3 4.500 9q1 4 5 4" fill="none" stroke="#33436e" strokeWidth="2.600" />
      <path d="M9 9l5 4-6 3z" fill="#33436e" />
    </>
  ),
  tRefresh: (
    <>
      <path d="M7 2Q1 3 2 9l3 4M9 14q6-1 5-7l-3-4" fill="none" stroke="#4a69b4" strokeWidth="2.400" />
      <path d="M2 13h6l-1-5zM14 3H8l1 5z" fill="#4a69b4" />
    </>
  ),
  tPlus: (
    <>
      <GridBack head="#8b8f98" />
      <path d="M8 3.500v9M3.500 8h9" stroke="#4f77d2" strokeWidth="3.400" />
    </>
  ),
  tCut: (
    <>
      <GridBack head="#8b8f98" />
      <path d="M4 6h8M4 10h8M5.500 4.500v7M10.500 4.500v7" stroke="#4f77d2" strokeWidth="2.200" />
    </>
  ),
  tMinus: (
    <>
      <GridBack head="#8b8f98" />
      <path d="M6 4.500h5M6 8h4M6 11.500h5" stroke="#4f77d2" strokeWidth="2.400" />
    </>
  ),
  tDel: (
    <>
      <GridBack head="#8b8f98" />
      <path d="M4 3l8 10M12 3 4 13" stroke="#3f62bc" strokeWidth="2.200" />
    </>
  ),
  tRowX: (
    <>
      <path d="M1 3.500h7M1 8h7M1 12.500h7" stroke="#8d9098" strokeWidth="3" />
      <path d="M7 3l8 10M15 3 7 13" stroke="#c82428" strokeWidth="2.200" />
    </>
  ),
  tRowL: (
    <>
      <rect x="4.500" y="1" width="5" height="3" fill="#c9ccd3" stroke="#777" />
      <rect x="4.500" y="11.500" width="5" height="3" fill="#c9ccd3" stroke="#777" />
      <rect x="9" y="6" width="6" height="4" fill="#8b8f98" />
      <path d="M8 8H2M4 5v6L0 8z" stroke="#c82428" strokeWidth="1.400" fill="#c82428" />
    </>
  ),
  tRowR: (
    <>
      <rect x="2.500" y="1" width="5" height="3" fill="#c9ccd3" stroke="#777" />
      <rect x="2.500" y="11.500" width="5" height="3" fill="#c9ccd3" stroke="#777" />
      <rect x="0" y="6" width="6" height="4" fill="#8b8f98" />
      <path d="M6 8h7M12 5v6l4-3z" stroke="#c82428" strokeWidth="1.400" fill="#c82428" />
    </>
  ),
  tYellow: (
    <>
      <rect x="0.500" y="1.500" width="15" height="13" fill="#f5f6f8" stroke="#6b6f78" />
      <rect x="1" y="3" width="14" height="4" fill="#e8e05a" />
      <path d="M1 2h14" stroke="#5c606a" strokeWidth="2" />
      <path d="M1 5h14M5.500 2v5M10.500 2v5" stroke="#8d8f60" strokeWidth="0.700" />
    </>
  ),
  tBlue: (
    <>
      <rect x="0.500" y="1.500" width="15" height="13" fill="#f5f6f8" stroke="#6b6f78" />
      <path d="M1 2h14M1 5h14M1 8h14M1 11h14" stroke="#4552b0" strokeWidth="2" />
      <path d="M5.500 2v12M10.500 2v12" stroke="#fff" strokeWidth="0.800" />
    </>
  ),
  tPaint: (
    <>
      <GridBack head="#e8e05a" />
      <path d="M13 2q0 7-5 10" stroke="#c9b022" strokeWidth="3" fill="none" />
      <path d="M9 14h6" stroke="#777" strokeWidth="1.500" />
    </>
  ),
  tHandDoc: (
    <>
      <rect x="1.500" y="3.500" width="13" height="12" fill="#fbfbfb" stroke="#4e525b" />
      <path d="M3 9.500h2M6 9.500h7M3 11.500h2M6 11.500h7M3 13.500h2M6 13.500h7" stroke="#4e525b" />
      <Hand />
    </>
  ),
  excel: (
    <>
      <rect x="0.800" y="0.800" width="14.400" height="14.400" fill="#f5fbf4" stroke="#2d7a35" strokeWidth="1.600" />
      <path d="M4 4l6 8M10.500 4 4 12" stroke="#2d8a3a" strokeWidth="2.400" />
      <path d="M11 5.500h2.500M11 8h2.500M11 10.500h2.500" stroke="#2d7a35" />
    </>
  ),
  calc: (
    <>
      <path d="M1 3h12l2 2v9H3l-2-2z" fill="#6c727e" stroke="#30343c" />
      <rect x="3" y="4" width="10" height="2.500" fill="#c9d2c8" />
      <path d="M3 8.500h11M3 10.500h11M3 12.500h11" stroke="#e8ebf0" strokeDasharray="1.500 1" />
    </>
  ),
  abEq: (
    <>
      <rect x="5.500" y="0.500" width="10" height="7" fill="#f3f4f7" stroke="#3a3f4a" />
      <rect x="5" y="0" width="11" height="2.500" fill="#2f4383" />
      <text x="0" y="15" fontFamily="Liberation Serif" fontStyle="italic" fontWeight="bold" fontSize="9" fill="#16181d">ab=</text>
    </>
  ),
  fx: (
    <text x="2" y="12" fontFamily="Liberation Serif" fontStyle="italic" fontWeight="bold" fontSize="15" fill="#16181d">
      f<tspan fontSize="13" dy="1">x</tspan>
    </text>
  ),
  fxDel: (
    <>
      <text x="5" y="13" fontFamily="Liberation Serif" fontStyle="italic" fontSize="13" fill="#1f232c">
        f<tspan fontSize="11" dy="1">x</tspan>
      </text>
      <path d="M0 0l8 7M7 0 1 7" stroke="#c82428" strokeWidth="1.700" />
    </>
  ),
  /* navigator */
  bridge: (
    <>
      <rect x="0" y="2" width="16" height="12" fill="#1f2566" />
      <path d="M0 10.500h16" stroke="#fff" strokeWidth="1.500" />
      <path d="M1 9 6.500 4 12 9M6.500 3v11M12 3v4l3 3" stroke="#dfe3f5" fill="none" />
    </>
  ),
  project: (
    <>
      <path d="M1 2h9M1 5.500h9M1 9h9" stroke="#5a96cf" strokeWidth="2.200" />
      <path d="M2 1v12M9 1v12" stroke="#7fb0dc" strokeWidth="1.600" />
      <path d="M6.500 3.500h6l3 3v9h-9z" fill="#e9ebee" stroke="#6b6f78" />
      <path d="M8 8.500h5M8 10.500h5M8 12.500h5" stroke="#8e929b" />
    </>
  ),
  folderOpen: (
    <>
      <path d="M2.500 13.500v-10h5l1 1.500h6.500v8.500z" fill="#9c8218" stroke="#6a580e" strokeWidth="0.900" />
      <path d="M0.500 5.500h12.500l2 8h-12z" fill="#d9bd38" stroke="#806b12" strokeWidth="0.700" />
    </>
  ),
  folder: (
    <>
      <path d="M1.500 13.500V3q0-1 1-1h4l1 1.500h6q1 0 1 1v9z" fill="#eed152" stroke="#8f7820" strokeWidth="0.900" />
      <path d="M2 5.500h12" stroke="#fbeea6" />
      <path d="M14.500 5v8.500h-12" stroke="#6d5a12" strokeWidth="1.200" fill="none" />
    </>
  ),
  loadCase: (
    <>
      <path d="M11.500 4v7M9.500 9.500h4L11.500 13z" fill="#4a69b4" stroke="#4a69b4" strokeWidth="1.500" />
      <path d="M0 14.500h15" stroke="#33363d" strokeWidth="1.300" />
    </>
  ),
  comboG: <Combo c="#2fae39" />,
  comboR: <Combo a="#5b8fe0" b="#2fae39" c="#c0161c" />,
  module: (
    <>
      <rect x="1" y="1" width="14" height="14" fill="#f6f6ff" stroke="#8a8ae0" strokeWidth="2" />
      <path d="M6 4.500h4M5.500 7h5M4 10h8M4.500 10v3M11.500 10v3M7 5v5M9 5v5" stroke="#56707a" strokeWidth="1.600" fill="none" />
    </>
  ),
  tabData: (
    <>
      <rect x="0.500" y="3.500" width="9" height="10" fill="#eccb3c" stroke="#9a7f17" />
      <rect x="4.500" y="1.500" width="11" height="8" fill="#e8f0fb" stroke="#4a74c0" />
      <rect x="4" y="1" width="12" height="2.500" fill="#3d6fc8" />
      <circle cx="9.500" cy="9" r="3.300" fill="#dfeaf8" stroke="#45516b" strokeWidth="1.300" />
      <path d="M12 11.500l3 4" stroke="#45516b" strokeWidth="2" />
    </>
  ),
  tabView: (
    <>
      <rect x="1" y="2" width="12" height="13.500" fill="#fdfdfd" stroke="#2f5fb4" strokeWidth="1.600" />
      <path d="M3.500 8.500h7M3.500 10.500h7M3.500 12.500h7" stroke="#3f6fc0" />
      <Hand />
    </>
  ),
  tabCam: (
    <>
      <path d="M11 0 4 9l-1 3-2 1v2h12v-2h-3l4-3V7l-4 3-2-1 5-7z" fill="#3d66c4" stroke="#1f3d8a" strokeWidth="0.800" />
      <path d="M11 3 7 8" stroke="#dfe9fb" strokeWidth="1.400" />
    </>
  ),
};

const FOLDER_MARKS = {
  fNode: <path d="M7 8h2v2H7z" fill="#c8141c" />,
  fMat: (
    <>
      <rect x="4" y="6" width="4" height="3" fill="#3a9a4a" />
      <rect x="5" y="9" width="5" height="3" fill="#36568f" />
      <rect x="9" y="6" width="2.500" height="4" fill="#6b4423" />
    </>
  ),
  fSec: (
    <>
      <path d="M7 7l6-2-1 6-5 1z" fill="#7fa3ee" />
      <path d="M3.500 6.500h5M6 6.500v5M3.500 11.500h5" stroke="#a8282c" strokeWidth="1.300" />
    </>
  ),
  fHinge: (
    <>
      <path d="M4 7.500h2v2H4z" fill="#b0392c" />
      <path d="M6 8.500h5" stroke="#7a4b18" />
    </>
  ),
  fEcc: <path d="M4 12l6-6 3 1-6 5z" fill="#e9e3b8" stroke="#7b6a2a" strokeWidth="1.100" />,
  fDiv: <path d="M4 12.500 12 5.500M6 8.500l3 3M9 6l3 3" fill="none" stroke="#5a4a28" strokeWidth="1.200" />,
  fMem: <path d="M4 12 12 6" stroke="#5b6270" strokeWidth="1.500" />,
  fSup: <path d="M7 7h3v2l2 3H5l2-3z" fill="#2f8a3d" stroke="#1d5c28" strokeWidth="0.600" />,
  fEl: <path d="M3 7.500h10M5.500 8v3M8 8v3M10.500 8v3" stroke="#28733a" strokeWidth="1.500" />,
  fNon: <path d="M8 4v9M7 6h2M7 10h2" stroke="#b0392c" strokeWidth="1.300" />,
  fSet: <path d="M4 12.500 7 7.500l3 4 2-5M5 9.500l6 1" fill="none" stroke="#8c4a22" strokeWidth="1.100" />,
};

function Icon({ name, className = "size-4" }) {
  const mark = FOLDER_MARKS[name];
  return (
    <svg viewBox="0 0 16 16" fill="none" aria-hidden="true" className={`shrink-0 overflow-visible ${className}`}>
      {mark ? (
        <>
          {ICONS.folder}
          {mark}
        </>
      ) : (
        ICONS[name]
      )}
    </svg>
  );
}

/* ---------- toolbars ---------- */

function ToolButton({ name, state }) {
  const on = state === "on";
  return (
    <button
      type="button"
      aria-label={name}
      className={`flex h-[22px] w-[22px] shrink-0 items-center justify-center ${
        on ? "rounded-[1px] border border-[#b8894a] bg-linear-to-b from-[#f5c68c] via-[#fbb866] to-[#fdeaba]" : ""
      }`}
    >
      <Icon name={name} className={state === "off" ? "size-4 opacity-60" : "size-4"} />
    </button>
  );
}

const Grip = () => (
  <div className="flex w-[10px] shrink-0 flex-col items-center gap-[2px]">
    {[0, 1, 2, 3].map((i) => (
      <i key={i} className="size-[2px] bg-[#a9afba]" />
    ))}
  </div>
);

const Sep = () => (
  <div className="flex w-2 shrink-0 justify-center">
    <i className="h-3.5 w-px bg-[#a2a8b4]" />
  </div>
);

const Arrow = () => (
  <button type="button" aria-label="Altro" className="flex h-[22px] w-[13px] shrink-0 items-center justify-center">
    <svg viewBox="0 0 5 3" className="h-[3px] w-[5px]" aria-hidden="true">
      <path d="M0 0h5L2.500 3z" fill="#5c6370" />
    </svg>
  </button>
);

/* "|" separator, ":" arrow, "-" prefix disabled, "+" prefix pressed */
function Items({ list }) {
  return list.split(" ").map((t, i) => {
    if (t === "|") return <Sep key={i} />;
    if (t === ":") return <Arrow key={i} />;
    if (t[0] === "-") return <ToolButton key={i} name={t.slice(1)} state="off" />;
    if (t[0] === "+") return <ToolButton key={i} name={t.slice(1)} state="on" />;
    return <ToolButton key={i} name={t} />;
  });
}

const Band = ({ children }) => (
  <div className="flex h-[25px] items-center rounded-r-md border-b border-[#a5abb6] bg-linear-to-b from-[#edf1f8] to-[#d6dbe6]">
    {children}
  </div>
);

function Toolbars() {
  return (
    <div className="flex flex-col gap-px bg-[#cfd3dc] pb-px">
      <div className="flex gap-0.5">
        <Band>
          <Grip />
          <Items list="newFile open drawerO drawerB save clip print preview | undo redo | -selPoly -selEllipse -selRing selAdd -winCopy | +navToggle +tblToggle | newLoad" />
          <div className="mx-0.5 flex h-[18px] w-[154px] bg-white">
            <select
              aria-label="Modulo"
              className="h-[18px] w-full appearance-none overflow-hidden bg-white pl-[3px] font-['Noto_Sans',sans-serif] text-[11px] leading-[18px] text-black"
            >
              <option>CRANEWAY CA1 - Progetta</option>
            </select>
            <span className="m-px flex w-[13px] shrink-0 items-center justify-center bg-[#e4e8f0]">
              <svg viewBox="0 0 5 3" className="h-[3px] w-[5px]" aria-hidden="true">
                <path d="M0 0h5L2.500 3z" fill="#5c6370" />
              </svg>
            </span>
          </div>
          <Items list="-prev -next -eyeG -xxG eye -xx | binoc abacusW abacus" />
        </Band>
        <Band>
          <Grip />
          <Items list="handGrid snapGrid cube1 cube2 +cube3 gridPersp wrenchWin | copyObj rotate mirror explode info gearDoc gears" />
        </Band>
        <Band>
          <Grip />
          <Items list="mon -monUp redPage -redPageUp" />
        </Band>
      </div>
      <div className="flex gap-0.5">
        <Band>
          <Grip />
          <Items list="node : member memberSet -memberT -support -hinge | -loadNode -loadMember -loadMoment -loadFree | dim : comment | guideGrid | combB :" />
        </Band>
        <Band>
          <Grip />
          <Items list="pan zoomWin zoomX cubeWire cubes | vX vY vZ vmX : micro : | solid :" />
        </Band>
        <Band>
          <Grip />
          <Items list="-deform -stress | -resI -dN -dVy -dVz -dMt -dMy -dMz -dpy -dpz | -react -section -resGrid | -panel" />
        </Band>
      </div>
    </div>
  );
}

/* ---------- navigator tree ---------- */

/* guides: one letter per column. v = through line, t = tee, l = last elbow, space = empty */
const TREE = [
  ["", "bridge", "CRANEWAY"],
  ["l", "project", "asd* [Esempi RX-TIMBER]", "-", true],
  [" t", "folderOpen", "Dati del modello", "-"],
  [" vt", "fNode", "Nodi"],
  [" vt", "fMat", "Materiali", "+"],
  [" vt", "fSec", "Sezioni trasversali"],
  [" vt", "fHinge", "Vincoli interni delle aste"],
  [" vt", "fEcc", "Eccentricità delle aste"],
  [" vt", "fDiv", "Divisioni delle aste"],
  [" vt", "fMem", "Aste"],
  [" vt", "fSup", "Vincoli esterni dei nodi"],
  [" vt", "fEl", "Vincoli esterni elastici delle aste"],
  [" vt", "fNon", "Non-linearità delle aste"],
  [" vl", "fSet", "Set di aste"],
  [" t", "folderOpen", "Casi e combinazioni di carico", "-"],
  [" vt", "loadCase", "Casi di carico"],
  [" vt", "comboG", "Combinazioni di carico"],
  [" vt", "combB", "Combinazioni di risultati"],
  [" vl", "comboR", "Super combinazioni"],
  [" t", "folder", "Carichi"],
  [" t", "folder", "Risultati"],
  [" t", "folder", "Relazioni di calcolo"],
  [" t", "folder", "Oggetti guida", "+"],
  [" l", "folderOpen", "Moduli aggiuntivi", "-"],
  ["  l", "module", "CRANEWAY - Progettazione delle vi", null, true],
];

function Guide({ kind, sign }) {
  const drawing = (
    <svg viewBox="0 0 19 18" className="h-[18px] w-[19px] shrink-0" aria-hidden="true" shapeRendering="crispEdges">
      {kind !== " " && <path d={kind === "l" ? "M9.5 0v10" : "M9.5 0v18"} stroke="#77776f" strokeDasharray="1 1" />}
      {(kind === "t" || kind === "l") && <path d="M10 10.5h10" stroke="#77776f" strokeDasharray="1 1" />}
      {sign && (
        <>
          <rect x="5.5" y="6.5" width="8" height="8" fill="#fff" stroke="#8f98a8" />
          <path d={sign === "+" ? "M7 10.5h5M9.5 8v5" : "M7 10.5h5"} stroke="#3a4a78" />
        </>
      )}
    </svg>
  );
  return sign ? (
    <button type="button" aria-label={sign === "+" ? "Espandi" : "Comprimi"} className="shrink-0">
      {drawing}
    </button>
  ) : (
    drawing
  );
}

function TreeRow({ row }) {
  const [guides, icon, text, sign, bold] = row;
  return (
    <li className="flex h-[18px] items-center pl-[2px] whitespace-nowrap">
      {guides.split("").map((g, i) => (
        <Guide key={i} kind={g} sign={i === guides.length - 1 ? sign : null} />
      ))}
      <span className="flex w-[19px] shrink-0 justify-center">
        <Icon name={icon} />
      </span>
      <span className={bold ? "pl-[3px] font-bold" : "pl-[3px]"}>{text}</span>
    </li>
  );
}

const Pin = () => (
  <svg viewBox="0 0 9 9" className="size-[9px]" fill="none" stroke="#5c6370" aria-hidden="true">
    <path d="M2.500 5.500v-5h4v5M5.500 0.500v5M0.500 5.500h8M4.500 5.500v3" />
  </svg>
);
const Cross = ({ className = "size-[9px]" }) => (
  <svg viewBox="0 0 9 9" className={className} fill="none" stroke="currentColor" aria-hidden="true">
    <path d="M0.500 0.500l8 8M8.500 0.500l-8 8" />
  </svg>
);

const PanelHeader = ({ title }) => (
  <div className="flex h-[18px] shrink-0 items-center gap-2 bg-[#b9c0ca] pr-1 pl-1 text-[#444c58]">
    <h2 className="flex-1">{title}</h2>
    <button type="button" aria-label="Blocca">
      <Pin />
    </button>
    <button type="button" aria-label="Chiudi" className="text-[#5c6370]">
      <Cross />
    </button>
  </div>
);

const Chevron = ({ d }) => (
  <svg viewBox="0 0 8 8" className="size-2" fill="none" stroke="#444" strokeWidth="1.600" aria-hidden="true">
    <path d={d} />
  </svg>
);

function Navigator() {
  return (
    <aside className="flex w-[284px] shrink-0 flex-col">
      <PanelHeader title="Navigatore progetti - Dati" />
      <div className="mt-1 ml-[3px] flex min-h-0 flex-1 flex-col border border-[#8f959f] bg-[#fbfbf4]">
        <ul className="min-h-0 flex-1 overflow-hidden text-black">
          {TREE.map((row, i) => (
            <TreeRow key={i} row={row} />
          ))}
        </ul>
        <div className="flex h-[15px] shrink-0 items-center bg-[#f0f0f0]">
          <button type="button" aria-label="Scorri a sinistra" className="flex w-[17px] justify-center">
            <Chevron d="M5.500 1 2.500 4l3 3" />
          </button>
          <div className="flex h-full flex-1">
            <div className="h-full w-[83%] bg-[#cdcdcd]" />
          </div>
          <button type="button" aria-label="Scorri a destra" className="flex w-[17px] justify-center">
            <Chevron d="M2.500 1l3 3-3 3" />
          </button>
        </div>
      </div>
      <div className="mt-1 flex h-[23px] shrink-0 items-start gap-1 px-1 text-[#3f4856]">
        <button type="button" className="flex h-[21px] items-center gap-px rounded-b border border-t-0 border-[#9fc7c4] bg-[#eef1f5] px-0.5">
          <Icon name="tabData" />
          Dati
        </button>
        <button type="button" className="flex h-[21px] items-center gap-0.5 px-1">
          <Icon name="tabView" />
          Visualizza
        </button>
        <button type="button" className="flex h-[21px] items-center gap-px px-1">
          <Icon name="tabCam" />
          Viste
        </button>
      </div>
    </aside>
  );
}

/* ---------- model view ---------- */

const OX = 303;
const OY = 212;
const STEP_X = 17.03;
const STEP_Y = 19;
const SLOPE = 0.1488;

let dots = "";
for (let i = 0; i < 100; i++) {
  for (let j = -60; j < 60; j++) {
    const x = Math.round(OX + i * STEP_X);
    const y = Math.round(OY + j * STEP_Y + i * STEP_X * SLOPE);
    if (y >= 0) dots += `M${x} ${y}h1v1h-1z`;
  }
}

const columns = [0, 1, 2, 4, 5, 6, 7, 8];
const diagonals = [-3, -2, -1, 1, 2, 3, 4];

function Triad({ x, y }) {
  return (
    <g transform={`translate(${x} ${y})`} fontFamily="DejaVu Sans" fontSize="10" textAnchor="middle">
      <path d="M0 0l-17 7" stroke="#18d818" strokeWidth="2" />
      <path d="M-20 8.500l6-6 2 5z" fill="#10c010" />
      <path d="M0 0v32" stroke="#2fe6e6" strokeWidth="2" />
      <path d="M-2.500 29.500h5v5L0 38.500l-2.500-4z" fill="#10a8a8" />
      <path d="M0 0l29 4" stroke="#e01414" strokeWidth="2" />
      <path d="M25 1l9 3.500-9 2.500z" fill="#c01010" />
      <text x="43.500" y="10.500" fill="#d01818">X</text>
      <text x="-25" y="15.500" fill="#28e028">Y</text>
      <text x="0" y="52" fill="#30d8e0">Z</text>
    </g>
  );
}

function ModelView() {
  return (
    <div className="min-h-0 flex-1 overflow-hidden border border-[#6f757f] bg-black">
      <svg className="block size-full" role="img" aria-label="Modello">
        <rect x={OX} y="0" width="100%" height="100%" fill="#0a0a0a" />
        <g shapeRendering="crispEdges">
          {columns.map((c) => (
            <rect key={c} x={OX + Math.round(c * 10 * STEP_X)} y="0" width="1" height="3000" fill="#303030" />
          ))}
          {diagonals.map((d) => (
            <path key={d} d={`M${OX} ${OY + d * 190 + 0.5}l2000 ${2000 * SLOPE}`} stroke="#3a3a3a" />
          ))}
          <path d={dots} fill="#c4c4c4" />
          <rect x={OX + 511} y="0" width="1" height="3000" fill="#1d7f80" />
          <path d={`M${OX} ${OY + 0.5}l2000 ${2000 * SLOPE}`} stroke="#1d7f80" />
        </g>
        <Triad x={OX + 511.500} y={OY + 76.500} />
        <Triad x={56} y={550} />
      </svg>
    </div>
  );
}

/* ---------- data table ---------- */

const LETTERS = ["A", "B", "C", "D", "E", "F"];
const SHEETS = [
  "Nodi",
  "Materiali",
  "Sezioni trasversali",
  "Vincoli interni delle aste",
  "Eccentricità delle aste",
  "Divisioni delle aste",
  "Aste",
  "Vincoli esterni dei nodi",
  "Vincoli esterni elastici delle aste",
  "Non-linearità delle aste",
  "Set di aste",
];

function DataTable() {
  const head = "border-r border-[#8f8f8f] bg-[#efefef] p-0 align-top font-normal";
  return (
    <table className="w-full table-fixed border-separate border-spacing-0 border-t border-l border-[#6d6d6d] text-center text-[11px] leading-[13px] text-black">
      <colgroup>
        <col className="w-[45px]" />
        <col className="w-[72px]" />
        <col className="w-[90px]" />
        <col className="w-[78px]" />
        <col className="w-[78px]" />
        <col className="w-[78px]" />
        <col />
      </colgroup>
      <thead>
        <tr className="h-[15px]">
          <th rowSpan={3} className="border-r border-b border-[#6d6d6d] bg-[#e6e6e6] p-0 pb-1 align-bottom font-normal">
            Nodo
            <br />
            nr.
          </th>
          {LETTERS.map((l) => (
            <th
              key={l}
              className={`border-r border-b border-[#6d6d6d] p-0 text-xs leading-[14px] font-normal ${
                l === "A" ? "bg-[#0078d7] text-white" : "bg-[#e2e2e2]"
              }`}
            >
              {l}
            </th>
          ))}
        </tr>
        <tr className="h-4">
          <th className={head}>Nodo di</th>
          <th className={head}>Sistema di</th>
          <th colSpan={3} className={head}>
            Coordinate del nodo
          </th>
          <th className={head} />
        </tr>
        <tr className="h-4">
          <th className={`${head} border-b`}>riferimento</th>
          <th className={`${head} border-b`}>coordinate</th>
          <th className={`${head} border-b`}>X [m]</th>
          <th className={`${head} border-b`}>Y [m]</th>
          <th className={`${head} border-b`}>Z [m]</th>
          <th className={`${head} border-b`}>Commento</th>
        </tr>
      </thead>
      <tbody>
        {[1, 2, 3, 4, 5].map((n) => (
          <tr key={n} className="h-4">
            <th
              className={`border-r border-b border-[#6d6d6d] p-0 text-xs leading-[15px] font-normal ${
                n === 1 ? "bg-[#0078d7] text-white" : "bg-[#e2e2e2]"
              }`}
            >
              {n}
            </th>
            {LETTERS.map((l) => (
              <td
                key={l}
                className={`border-r border-b border-[#a0a0a0] p-0 ${l === "F" ? "bg-[#efefef]" : "bg-white"} ${
                  n === 1 && l === "A" ? "outline-1 -outline-offset-1 outline-black outline-dotted" : ""
                }`}
              />
            ))}
          </tr>
        ))}
      </tbody>
    </table>
  );
}

function TablePanel() {
  return (
    <section className="flex shrink-0 flex-col">
      <div className="border-t border-white/60">
        <PanelHeader title="1.1 Nodi" />
      </div>
      <div className="flex h-[26px] items-center bg-linear-to-r from-[#eef1f7] to-[#cfd3dc] pl-[9px]">
        <Items list="+tEdit tInsert -tDown -tDiag -tWave | tLeft tRight | +tSync1 +tSync2 -tRefresh | -tPlus -tCut -tMinus | -tDel | -tRowX -tRowL -tRowR | -tYellow -tBlue | -tPaint | tHandDoc binoc excel calc | abEq fx -fxDel" />
      </div>
      <div className="bg-[#f0f0f0] font-['Liberation_Sans',sans-serif]">
        <div className="flex border border-[#6d6d6d] pt-0.5 pb-[17px] pl-0.5">
          <div className="min-w-0 flex-1">
            <DataTable />
          </div>
          <div className="flex w-[18px] shrink-0 flex-col items-center justify-between px-px">
            <button type="button" aria-label="Scorri su" className="flex h-[17px] items-center">
              <Chevron d="M1 5.500l3-3 3 3" />
            </button>
            <div className="w-full flex-1 bg-[#cdcdcd]" />
            <button type="button" aria-label="Scorri giù" className="flex h-[17px] items-center">
              <Chevron d="M1 2.500l3 3 3-3" />
            </button>
          </div>
        </div>
        <div role="tablist" className="flex h-[17px] border-b border-[#d8d8d8] text-[11px] leading-[14px] text-black">
          {SHEETS.map((s, i) => (
            <button
              key={s}
              type="button"
              role="tab"
              aria-selected={i === 0}
              className={`h-4 shrink-0 rounded-b-[4px] border-r border-b border-[#4d4d4d] px-[3px] whitespace-nowrap ${
                i === 0 ? "border-l bg-[#f0f0f0]" : "bg-[#e2e2e2]"
              }`}
            >
              {s}
            </button>
          ))}
        </div>
        <div className="h-[19px]" />
      </div>
    </section>
  );
}

/* ---------- window ---------- */

const MENU = [
  "Modifica",
  "Visualizza",
  "Inserisci",
  "Calcola",
  "Risultati",
  "Strumenti",
  "Tabella",
  "Opzioni",
  "Moduli aggiuntivi",
  "Finestra",
  "Aiuto",
];

export default function App() {
  return (
    <div className="flex h-screen flex-col overflow-hidden border border-[#2f7cc4] bg-[#cfd3dc] font-['Noto_Sans',sans-serif] text-[11px] leading-[18px]">
      <header className="flex h-[30px] shrink-0 items-center bg-white pl-[7px] text-black">
        <Icon name="app" />
        <h1 className="flex-1 pl-1.5">CRANEWAY 8.13.01 x64 - [asd*]</h1>
        <button type="button" aria-label="Riduci a icona" className="flex w-[46px] justify-center">
          <i className="h-px w-[10px] bg-black" />
        </button>
        <button type="button" aria-label="Ingrandisci" className="flex w-[46px] justify-center">
          <i className="size-[10px] border border-black" />
        </button>
        <button type="button" aria-label="Chiudi" className="flex w-[46px] justify-center">
          <Cross className="size-[10px]" />
        </button>
      </header>
      <nav className="flex h-[25px] shrink-0 items-center gap-[15px] pb-0.5 text-[#4a5464]">
        <div className="flex items-center">
          <Grip />
          <Icon name="doc" />
          <button type="button" className="pl-[10px]">
            <u className="underline-offset-2">F</u>ile
          </button>
        </div>
        {MENU.map((m) => (
          <button key={m} type="button" className="whitespace-nowrap">
            {m}
          </button>
        ))}
        <div className="ml-auto flex items-center gap-2 pt-1 pr-1.5 text-[#7c828c]">
          <button type="button" aria-label="Riduci documento">
            <svg viewBox="0 0 8 8" className="size-2" stroke="currentColor" strokeWidth="2" aria-hidden="true">
              <path d="M1 7h7" />
            </svg>
          </button>
          <button type="button" aria-label="Ripristina documento">
            <svg viewBox="0 0 10 8" className="h-2 w-[10px]" fill="none" stroke="currentColor" aria-hidden="true">
              <path d="M2.500 2V.5h7v5H8M.5 2.500h7v5h-7zM.5 3.500h7" />
            </svg>
          </button>
          <button type="button" aria-label="Chiudi documento">
            <Cross className="size-2 stroke-2" />
          </button>
        </div>
      </nav>
      <Toolbars />
      <main className="flex min-h-0 flex-1">
        <Navigator />
        <div className="flex min-w-0 flex-1 flex-col gap-[5px] pr-px pl-[5px]">
          <ModelView />
          <TablePanel />
        </div>
      </main>
      <footer className="flex h-[21px] shrink-0 items-center border-t border-[#9a9fa8] bg-linear-to-b from-[#e2e5ec] via-[#b5bac4] to-[#a9aeb8] text-[#2f3744]">
        <div className="flex flex-1 justify-end gap-[3px]">
          {["SNAP", "GRIGLIA", "CARTES", "OSNAP", "LINEEG", "DXF"].map((s) => (
            <button key={s} type="button" className="h-[18px] border border-[#6f757f] border-r-white border-b-white px-0.5 leading-4">
              {s}
            </button>
          ))}
        </div>
        <div className="flex h-[18px] w-[483px] shrink-0 justify-end">
          <i className="w-[88px] border-l border-[#8b919c]" />
          <i className="w-[74px] border-l border-[#8b919c]" />
          <i className="w-[74px] border-l border-[#8b919c]" />
          <div className="flex w-[91px] items-end justify-end border-l border-[#8b919c] p-0.5">
            <svg viewBox="0 0 11 11" className="size-[11px]" fill="#6f757f" aria-hidden="true">
              <path d="M8 0h2v2H8zM4 4h2v2H4zM8 4h2v2H8zM0 8h2v2H0zM4 8h2v2H4zM8 8h2v2H8z" />
            </svg>
          </div>
        </div>
      </footer>
    </div>
  );
}
